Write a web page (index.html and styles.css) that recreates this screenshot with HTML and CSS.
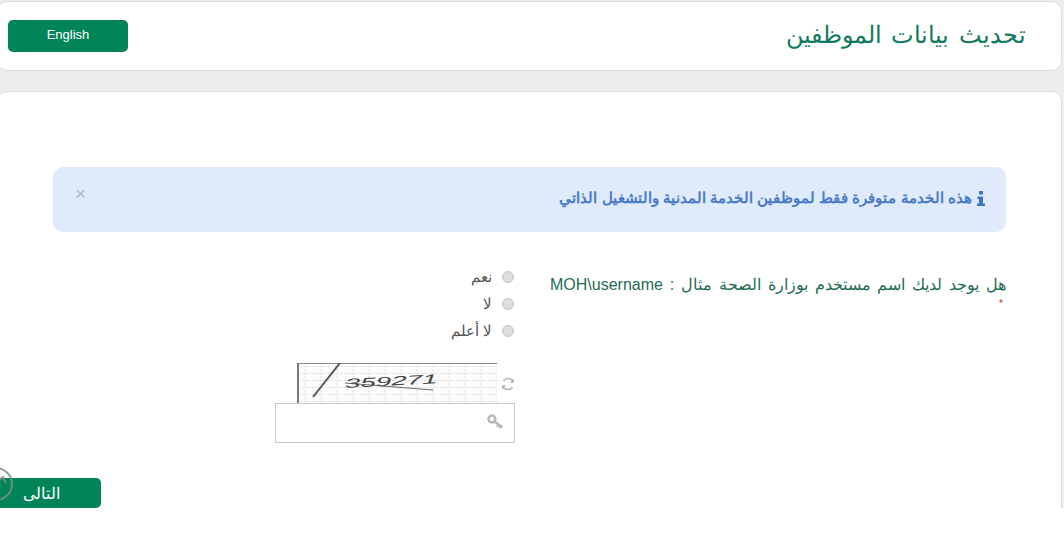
FILE: index.html
```html
<!DOCTYPE html>
<html lang="ar" dir="rtl">

<head>
    <meta charset="UTF-8">
    <meta name="viewport" content="width=device-width, initial-scale=1.0">
    <title>تحديث بيانات الموظفين</title>
    <link rel="stylesheet" href="styles.css">
</head>

<body>
    <div class="page">
        <header class="card top-card">
            <h1 class="page-title">تحديث بيانات الموظفين</h1>
            <button class="button lang-button" dir="ltr">English</button>
        </header>

        <main class="card form-card">
            <div class="alert">
                <p class="alert-text">
                    <svg class="info-icon" viewBox="0 0 8 15" aria-hidden="true">
                        <rect x="2" y="0" width="4" height="3.5" rx="0.5"></rect>
                        <path d="M0.5 5.5H6V12.5H8V15H0V12.5H2V8H0.5Z"></path>
                    </svg>
                    هذه الخدمة متوفرة فقط لموظفين الخدمة المدنية والتشغيل الذاتي
                </p>
                <span class="alert-close" dir="ltr">×</span>
            </div>

            <div class="form-row">
                <div class="question">
                    <div class="question-text">هل يوجد لديك اسم مستخدم بوزارة الصحة مثال : MOH\username</div>
                    <div class="required">*</div>
                </div>

                <div class="answers">
                    <div class="radio-list">
                        <label class="radio-row"><span class="radio"></span>نعم</label>
                        <label class="radio-row"><span class="radio"></span>لا</label>
                        <label class="radio-row"><span class="radio"></span>لا أعلم</label>
                    </div>

                    <div class="captcha-row">
                        <svg class="refresh-icon" viewBox="0 0 14 14" aria-hidden="true">
                            <path d="M12.3 5.2A5.5 5.5 0 0 0 2.4 4"></path>
                            <path d="M1.7 8.8A5.5 5.5 0 0 0 11.6 10"></path>
                            <path class="solid" d="M12.9 1.6V5.8H8.9Z"></path>
                            <path class="solid" d="M1.1 12.4V8.2H5.1Z"></path>
                        </svg>
                        <svg class="captcha" viewBox="0 0 200 40" role="img" aria-label="captcha">
                            <defs>
                                <pattern id="grid" width="16" height="7" patternUnits="userSpaceOnUse">
                                    <path d="M0 3.5H16M8 0V7" stroke="#dcdcdc" stroke-width="1" stroke-dasharray="1.5 1.5"></path>
                                </pattern>
                            </defs>
                            <rect width="200" height="40" fill="#fcfcfc"></rect>
                            <rect width="200" height="40" fill="url(#grid)"></rect>
                            <path d="M0 0.5H200" stroke="#8a8a8a"></path>
                            <path d="M1 0V40" stroke="#777" stroke-width="2"></path>
                            <path d="M43 0L16 34" stroke="#555" stroke-width="2"></path>
                            <text class="captcha-text" x="48" y="25" textLength="93" lengthAdjust="spacingAndGlyphs" transform="rotate(-3 48 25)">359271</text>
                            <path d="M48 20L136 27" stroke="#444" stroke-width="0.8"></path>
                        </svg>
                    </div>

                    <div class="captcha-input">
                        <svg class="key-icon" viewBox="0 0 16 14" aria-hidden="true">
                            <circle cx="4.6" cy="4.6" r="3.2"></circle>
                            <path d="M7 7L14.5 12.5M11 10L9.6 12M13.2 11.6L12 13.2"></path>
                        </svg>
                    </div>
                </div>
            </div>
        </main>

        <div class="form-footer">
            <button class="button next-button">التالى</button>
            <svg class="back-circle" viewBox="0 0 34 36" aria-hidden="true">
                <circle cx="17" cy="18" r="16"></circle>
                <path d="M19 15L24 11L27 17"></path>
            </svg>
        </div>
    </div>
</body>

</html>
```

FILE: styles.css
```css
html {
    background-color: white;
}

body {
    margin: 0;
    height: 533px;
    overflow: hidden;
    font-family: "Liberation Sans", "Noto Sans", sans-serif;
    color: #333;
}

.page {
    position: relative;
    height: 508px;
    overflow: hidden;
    padding-top: 1px;
    box-sizing: border-box;
    background-color: #eeeeee;
}

.card {
    background-color: white;
    border: 1px solid #dddddd;
    border-radius: 10px;
}

.top-card {
    height: 68px;
    margin: 0 2px 0 -3px;
    padding: 0 35px 0 10px;
    display: flex;
    justify-content: space-between;
    align-items: center;
}

.page-title {
    margin: 0 0 2px;
    font-size: 24px;
    font-weight: normal;
    word-spacing: 3px;
    color: #137a62;
}

.button {
    background-color: #018457;
    color: white;
    border: none;
    cursor: pointer;
    font-family: "Liberation Sans", sans-serif;
}

.lang-button {
    width: 120px;
    height: 32px;
    padding-bottom: 4px;
    border-radius: 5px;
    font-size: 13px;
}

.form-card {
    height: 460px;
    margin: 20px 2px 0 -3px;
    padding: 75px 55px 0 55px;
    border-radius: 10px 10px 0 0;
}

.alert {
    height: 65px;
    background-color: #dfeafa;
    border-radius: 10px;
    display: flex;
    justify-content: space-between;
}

.alert-text {
    margin: 0;
    padding: 22px 21px 0 0;
    font-size: 15px;
    font-weight: bold;
    color: #4a7bc9;
}

.info-icon {
    width: 8px;
    height: 15px;
    margin-left: 1px;
    vertical-align: -3px;
    fill: #3f74c8;
}

.alert-close {
    padding: 15px 0 0 22px;
    font-family: "Liberation Sans", sans-serif;
    font-size: 19px;
    line-height: 24px;
    color: #aeb7c6;
}

.form-row {
    display: flex;
    gap: 35px;
    margin-top: 31px;
}

.question {
    width: 456px;
    flex-shrink: 0;
    padding-top: 10px;
    font-size: 16px;
    line-height: 24px;
    color: #256c56;
}

.question-text {
    white-space: nowrap;
    word-spacing: 2.4px;
}

.required {
    padding-right: 3px;
    font-size: 10px;
    line-height: 14px;
    color: #c0392b;
}

.answers {
    width: 240px;
}

.radio-list {
    padding-right: 1px;
}

.radio-row {
    display: flex;
    align-items: center;
    gap: 10px;
    height: 27px;
    font-size: 15px;
    color: #555;
}

.radio {
    width: 12px;
    height: 12px;
    border: 1px solid #c4c4c4;
    border-radius: 50%;
    background-color: #dddddd;
    box-sizing: border-box;
}

.captcha-row {
    display: flex;
    align-items: center;
    gap: 4px;
    height: 40px;
    margin-top: 19px;
}

.refresh-icon {
    width: 14px;
    height: 14px;
    flex-shrink: 0;
    fill: none;
    stroke: #b5b5b5;
    stroke-width: 1.5;
    margin-top: 1px;
}

.refresh-icon .solid {
    fill: #b5b5b5;
    stroke: none;
}

.captcha {
    width: 200px;
    height: 40px;
    flex-shrink: 0;
}

.captcha-text {
    direction: ltr;
    font-family: "Liberation Sans", sans-serif;
    font-style: italic;
    font-size: 13px;
    fill: #444;
}

.captcha-input {
    width: 240px;
    height: 40px;
    box-sizing: border-box;
    border: 1px solid #c9c9c9;
    display: flex;
    align-items: center;
    padding-right: 10px;
}

.key-icon {
    width: 17px;
    height: 15px;
    margin-bottom: 3px;
    fill: none;
    stroke: #b8b8b8;
    stroke-width: 2.4;
}

/* sits over the page edge like the floating button on the original */
.form-footer {
    position: absolute;
    left: 0;
    top: 478px;
}

.next-button {
    display: block;
    width: 101px;
    height: 30px;
    padding: 0 0 0 23px;
    text-align: left;
    font-size: 16px;
    border-radius: 0 5px 5px 0;
}

.back-circle {
    position: absolute;
    left: -21px;
    top: -12px;
    width: 34px;
    height: 36px;
    fill: none;
    stroke: #7d8f90;
    stroke-width: 2;
    opacity: 0.85;
}
```
